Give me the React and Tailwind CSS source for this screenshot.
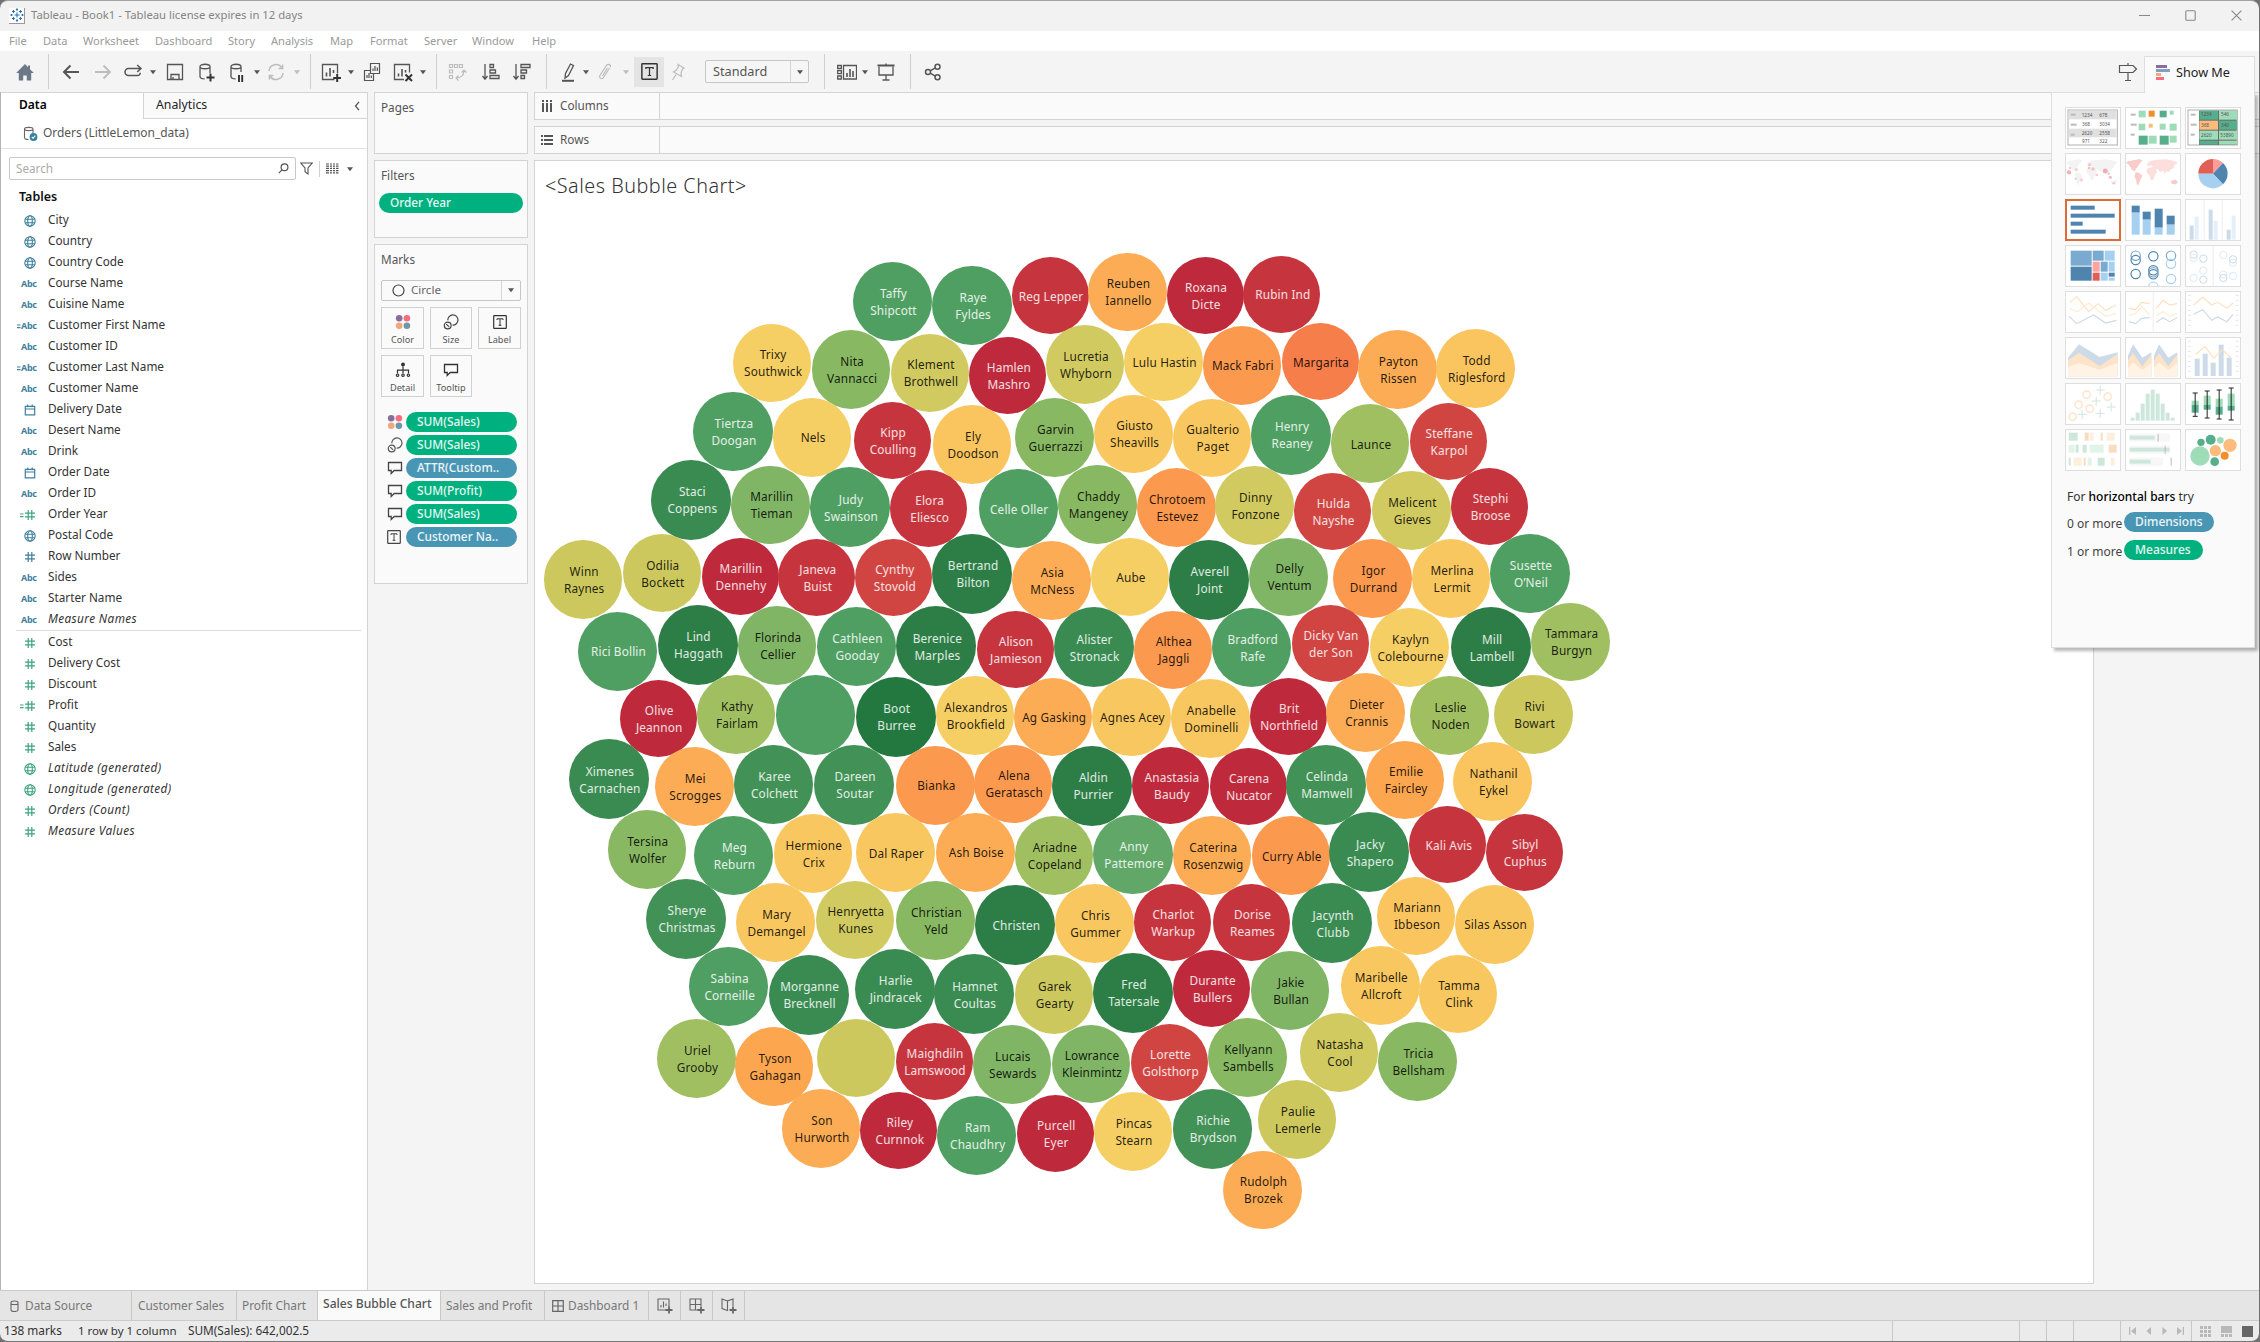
import React from "react";

/* ---------- bubble data: [label lines, cx, cy, colour key] ---------- */
const COLORS = {
  g1: "#22783f", g2: "#2c7e46", g3: "#3a8b51", g4: "#429156", g5: "#4f9f62", g6: "#60a768",
  l1: "#81b566", l2: "#88b862", l3: "#a0bf61",
  y1: "#ccc85e", y2: "#d0ca61", y3: "#f5ce64", y4: "#f9c75f", y5: "#fac45e",
  o1: "#fbac54", o2: "#fca650", o3: "#fb994e", o4: "#f57e4a",
  r1: "#d04542", r2: "#c6353e", r3: "#be293c",
};

const BUBBLES = [
  ["Taffy|Shipcott", 892.5, 301.4, "g5"], ["Raye|Fyldes", 972.1, 305.7, "g5"], ["Reg Lepper", 1050, 295.7, "r2"],
  ["Reuben|Iannello", 1127.5, 291.8, "o1"], ["Roxana|Dicte", 1205, 295.7, "r3"], ["Rubin Ind", 1281.8, 294.3, "r2"],
  ["Trixy|Southwick", 772.1, 362.9, "y3"], ["Nita|Vannacci", 851.1, 369.3, "l2"], ["Klement|Brothwell", 930, 372.9, "y2"],
  ["Hamlen|Mashro", 1007.9, 375.4, "r3"], ["Lucretia|Whyborn", 1085, 364.6, "y2"], ["Lulu Hastin", 1163.6, 361.8, "y3"],
  ["Mack Fabri", 1241.8, 365.4, "o3"], ["Margarita", 1320, 361.8, "o4"], ["Payton|Rissen", 1397.5, 369.6, "o1"],
  ["Todd|Riglesford", 1475.7, 368.6, "y5"],
  ["Tiertza|Doogan", 732.9, 431.8, "g5"], ["Nels", 812.1, 437.5, "y3"], ["Kipp|Coulling", 892.1, 440.7, "r2"],
  ["Ely|Doodson", 972.1, 444.3, "y5"], ["Garvin|Guerrazzi", 1054.6, 437.5, "l2"], ["Giusto|Sheavills", 1133.6, 433.9, "y4"],
  ["Gualterio|Paget", 1211.8, 437.9, "y4"], ["Henry|Reaney", 1291.1, 435, "g5"], ["Launce", 1370, 443.6, "l3"],
  ["Steffane|Karpol", 1448.2, 441.4, "r1"],
  ["Staci|Coppens", 691.4, 499.6, "g3"], ["Marillin|Tieman", 770.7, 505, "l1"], ["Judy|Swainson", 850, 507.1, "g5"],
  ["Elora|Eliesco", 928.6, 508.6, "r2"], ["Celle Oller", 1018.2, 508.6, "g5"], ["Chaddy|Mangeney", 1097.5, 504.3, "l2"],
  ["Chrotoem|Estevez", 1176.4, 507.5, "o3"], ["Dinny|Fonzone", 1254.6, 505.7, "y2"], ["Hulda|Nayshe", 1332.5, 511.8, "r1"],
  ["Melicent|Gieves", 1411.4, 510.4, "y2"], ["Stephi|Broose", 1489.6, 506.4, "r2"],
  ["Winn|Raynes", 583.2, 579.3, "y1"], ["Odilia|Bockett", 661.8, 573.2, "y1"], ["Marillin|Dennehy", 740, 576.4, "r3"],
  ["Janeva|Buist", 816.8, 577.9, "r2"], ["Cynthy|Stovold", 893.9, 577.5, "r1"], ["Bertrand|Bilton", 972.1, 573.9, "g2"],
  ["Asia|McNess", 1051.4, 580.4, "o1"], ["Aube", 1130, 576.8, "y3"], ["Averell|Joint", 1208.9, 579.6, "g2"],
  ["Delly|Ventum", 1288.6, 576.8, "l1"], ["Igor|Durrand", 1372.5, 578.6, "o3"], ["Merlina|Lermit", 1451.1, 578.6, "y4"],
  ["Susette|O’Neil", 1530, 573.6, "g5"],
  ["Rici Bollin", 617.5, 651.4, "g5"], ["Lind|Haggath", 697.5, 644.6, "g2"], ["Florinda|Cellier", 777.1, 645.4, "l1"],
  ["Cathleen|Gooday", 856.4, 646.8, "g5"], ["Berenice|Marples", 936.4, 646.1, "g2"], ["Alison|Jamieson", 1015, 649.3, "r2"],
  ["Alister|Stronack", 1093.6, 647.1, "g3"], ["Althea|Jaggli", 1172.9, 650, "o3"], ["Bradford|Rafe", 1251.8, 647.5, "g5"],
  ["Dicky Van|der Son", 1330, 643.6, "r1"], ["Kaylyn|Colebourne", 1409.6, 647.5, "y3"], ["Mill|Lambell", 1491.1, 647.1, "g2"],
  ["Tammara|Burgyn", 1570.7, 641.8, "l3"],
  ["Olive|Jeannon", 658.2, 718.2, "r3"], ["Kathy|Fairlam", 736.1, 714.3, "l3"], ["", 815.4, 715, "g5"],
  ["Boot|Burree", 895.7, 716.8, "g1"], ["Alexandros|Brookfield", 975, 715.7, "y3"], ["Ag Gasking", 1053.2, 716.8, "o1"],
  ["Agnes Acey", 1131.4, 716.8, "y4"], ["Anabelle|Dominelli", 1210.4, 718.6, "y4"], ["Brit|Northfield", 1288.2, 716.4, "r3"],
  ["Dieter|Crannis", 1365.7, 712.5, "o1"], ["Leslie|Noden", 1449.6, 715.4, "l3"], ["Rivi|Bowart", 1533.6, 714.3, "y1"],
  ["Ximenes|Carnachen", 608.9, 779.3, "g3"], ["Mei|Scrogges", 694.3, 786.7, "o1"], ["Karee|Colchett", 773.5, 784.3, "g4"],
  ["Dareen|Soutar", 854.1, 785, "g4"], ["Bianka", 935.4, 785.3, "o3"], ["Alena|Geratasch", 1013.2, 784, "o3"],
  ["Aldin|Purrier", 1092.4, 785.7, "g2"], ["Anastasia|Baudy", 1170.9, 785.7, "r3"], ["Carena|Nucator", 1248.1, 786.7, "r3"],
  ["Celinda|Mamwell", 1325.9, 785, "g4"], ["Emilie|Faircley", 1405.1, 780, "o2"], ["Nathanil|Eykel", 1492.6, 781.3, "y5"],
  ["Tersina|Wolfer", 646.8, 849.3, "l2"], ["Meg|Reburn", 733.5, 855.3, "g5"], ["Hermione|Crix", 812.8, 853.3, "y4"],
  ["Dal Raper", 895.4, 852.7, "y4"], ["Ash Boise", 975.3, 852.3, "o1"], ["Ariadne|Copeland", 1053.8, 855.3, "l3"],
  ["Anny|Pattemore", 1133, 854.3, "g6"], ["Caterina|Rosenzwig", 1212.2, 855.7, "o1"], ["Curry Able", 1290.8, 855.7, "o3"],
  ["Jacky|Shapero", 1369.3, 852, "g3"], ["Kali Avis", 1447.8, 844.7, "r2"], ["Sibyl|Cuphus", 1524.3, 852.3, "r2"],
  ["Sherye|Christmas", 686, 919, "g4"], ["Mary|Demangel", 775.6, 922.3, "y4"], ["Henryetta|Kunes", 854.8, 920, "y2"],
  ["Christian|Yeld", 935.4, 920.3, "l2"], ["Christen", 1015.3, 925, "g2"], ["Chris|Gummer", 1094.5, 923.3, "y4"],
  ["Charlot|Warkup", 1172.3, 922.3, "r2"], ["Dorise|Reames", 1251.5, 922.7, "r2"], ["Jacynth|Clubb", 1332.1, 923, "g3"],
  ["Mariann|Ibbeson", 1416.1, 916, "y5"], ["Silas Asson", 1494.6, 924.3, "y4"],
  ["Sabina|Corneille", 728.7, 986.3, "g5"], ["Morganne|Brecknell", 808.6, 994.7, "g3"], ["Harlie|Jindracek", 894.7, 988.7, "g3"],
  ["Hamnet|Coultas", 973.9, 994, "g3"], ["Garek|Gearty", 1053.8, 994.7, "y1"], ["Fred|Tatersale", 1133, 992.7, "g2"],
  ["Durante|Bullers", 1211.6, 988.3, "r3"], ["Jakie|Bullan", 1290.1, 990.7, "l1"], ["Maribelle|Allcroft", 1380.3, 985.7, "y4"],
  ["Tamma|Clink", 1458.1, 994, "y4"],
  ["Uriel|Grooby", 696.4, 1058.7, "l3"], ["Tyson|Gahagan", 774.2, 1066.3, "o2"], ["", 856.1, 1058, "y1"],
  ["Maighdiln|Lamswood", 934, 1061.3, "r2"], ["Lucais|Sewards", 1011.8, 1064.3, "l1"], ["Lowrance|Kleinmintz", 1091, 1064, "l1"],
  ["Lorette|Golsthorp", 1169.5, 1062.3, "r1"], ["Kellyann|Sambells", 1247.4, 1057.7, "l2"], ["Natasha|Cool", 1339, 1052.7, "y2"],
  ["Tricia|Bellsham", 1417.5, 1061.3, "l2"],
  ["Son|Hurworth", 821, 1128.7, "o1"], ["Riley|Curnnok", 898.9, 1130, "r3"], ["Ram|Chaudhry", 976.7, 1135.7, "g5"],
  ["Purcell|Eyer", 1055.2, 1133.3, "r3"], ["Pincas|Stearn", 1133, 1131.3, "y3"], ["Richie|Brydson", 1212.2, 1129, "g4"],
  ["Paulie|Lemerle", 1297, 1119.3, "y1"], ["Rudolph|Brozek", 1262.5, 1190, "o1"],
];

const SHEET_X = 535;
const SHEET_Y = 161;

function radiusFor(key) {
  if (key[0] === "r" || key === "o4") return 38.5;
  if (key === "g1" || key === "g2" || key === "g3") return 40;
  if (key[0] === "g") return 39.7;
  return 39.3;
}

function Bubble({ label, cx, cy, tone }) {
  const r = radiusFor(tone);
  const light = tone[0] === "g" || tone[0] === "r";
  return (
    <div
      className={
        "absolute flex flex-col items-center justify-center rounded-full pl-[2px] pt-px text-[11.8px] leading-[17px] tracking-[0.15px] whitespace-nowrap " +
        (light ? "text-white/85" : "text-black/85")
      }
      style={{ left: cx - r - SHEET_X, top: cy - r - SHEET_Y, width: 2 * r, height: 2 * r, backgroundColor: COLORS[tone] }}
    >
      {label.split("|").map((line) => (
        <span key={line}>{line}</span>
      ))}
    </div>
  );
}

/* ---------- small icons ---------- */
const Svg = ({ w = 20, h = 20, vb, className = "", children, c = "#555", sw = 1.3 }) => (
  <svg width={w} height={h} viewBox={vb || `0 0 ${w} ${h}`} className={"shrink-0 " + className} fill="none" stroke={c} strokeWidth={sw}>
    {children}
  </svg>
);

const Caret = ({ className = "", c = "#555" }) => (
  <Svg w={8} h={6} c="none" className={className}><path d="M1 1.2h6L4 5.2z" fill={c} /></Svg>
);

const Globe = ({ c }) => (
  <Svg w={12} h={12} c={c} sw={1.1}>
    <circle cx="6" cy="6" r="5.2" />
    <ellipse cx="6" cy="6" rx="2.3" ry="5.2" />
    <path d="M1.2 4.2h9.6M1.2 7.8h9.6" />
  </Svg>
);
const Hash = ({ c }) => (
  <Svg w={12} h={12} c={c} sw={1.2}><path d="M4.2 1v10M7.8 1v10M1 4.2h10M1 7.8h10" /></Svg>
);
const CalcMark = ({ c }) => (
  <Svg w={4} h={12} c={c} sw={1.1}><path d="M0 5h3.5M0 7.6h3.5" /></Svg>
);
const Calendar = ({ c }) => (
  <Svg w={12} h={12} c={c} sw={1.2}><path d="M1.3 2.3h9.4v8.6H1.3zM1.3 5h9.4M3.8 .6v2.6M8.2 .6v2.6" /></Svg>
);
const ColorDots = ({ className = "" }) => (
  <Svg w={16} h={16} c="none" className={className}>
    <circle cx="4.2" cy="4.2" r="3.3" fill="#876e9b" /><circle cx="11.9" cy="4.2" r="3.3" fill="#f86d7d" />
    <circle cx="4.2" cy="11.8" r="3.3" fill="#f2a67c" /><circle cx="11.9" cy="11.8" r="3.3" fill="#6f98a5" />
  </Svg>
);
const SizeIcon = ({ c = "#444" }) => (
  <Svg w={16} h={16} c={c} sw={1.2}>
    <path d="M4.8 6.300A5.100 5.100 0 1 1 9.600 11.100" /><circle cx="4.700" cy="11.500" r="3.400" /><path d="M3.300 10.100l2.800 2.800" />
  </Svg>
);
const LabelIcon = ({ c = "#444", s = 14 }) => (
  <Svg w={s} h={s} vb="0 0 14 14" c={c} sw={1.2}>
    <rect x=".7" y=".7" width="12.6" height="12.6" rx=".6" />
    <path d="M4 5V3.8h6V5M7 3.8v6.4M5.6 10.3h2.8" strokeWidth="1" />
  </Svg>
);
const DetailIcon = () => (
  <Svg w={16} h={16} c="#333" sw={1.2}>
    <circle cx="8" cy="2.6" r="2" fill="#333" stroke="none" />
    <path d="M8 4.5v7M2.500 11.500V8.200h11v3.300" />
    <circle cx="2.6" cy="13.2" r="1.2" /><circle cx="8" cy="13.2" r="1.2" /><circle cx="13.4" cy="13.2" r="1.2" />
  </Svg>
);
const TipIcon = ({ c = "#444" }) => (
  <Svg w={16} h={16} c={c} sw={1.3}><path d="M1.500 2.500h13v8H7.200l-3 3v-3H1.500z" /></Svg>
);

/* ---------- top bars ---------- */
function TitleBar() {
  return (
    <div className="flex h-[31px] items-center rounded-t-lg border-t border-[#a0a0a0] bg-[#f2f2f2] pb-px">
      <div className="ml-[9px] flex h-4 w-4 items-center justify-center border-r border-b border-[#999] bg-white">
        <Svg w={14} h={14} c="#2f75a8" sw={1.1}>
          <path d="M7 4.5v5M4.500 7h5M7 .3v2.400M5.900 1.500h2.200M7 11.300v2.400M5.900 12.500h2.200M.3 7h2.400M1.500 5.900v2.200M11.300 7h2.400M12.500 5.900v2.200M3.500 2v3M2 3.500h3M10.500 2v3M9 3.500h3M3.500 9v3M2 10.500h3M10.500 9v3M9 10.500h3" />
        </Svg>
      </div>
      <div className="ml-[6px] text-[11.300px] text-[#858585]">Tableau - Book1 - Tableau license expires in 12 days</div>
      <div className="mr-[17px] ml-auto flex items-center gap-[35px]">
        <Svg w={11} h={11} c="#888" sw={1}><path d="M0 5.500h11" /></Svg>
        <Svg w={11} h={11} c="#888" sw={1.100}><rect x=".8" y=".8" width="9.4" height="9.4" rx="1" /></Svg>
        <Svg w={11} h={11} c="#888" sw={1.100}><path d="M.6 .6l9.800 9.800M10.400 .6L.6 10.400" /></Svg>
      </div>
    </div>
  );
}

function MenuBar() {
  return (
    <div className="flex h-5 items-center bg-white pt-px pl-[9px] text-[11.100px] text-[#9a9a9a]">
      <span className="w-[34px]">File</span><span className="w-[40px]">Data</span><span className="w-[72px]">Worksheet</span>
      <span className="w-[73px]">Dashboard</span><span className="w-[43px]">Story</span><span className="w-[59px]">Analysis</span>
      <span className="w-[40px]">Map</span><span className="w-[54px]">Format</span><span className="w-[48px]">Server</span>
      <span className="w-[60px]">Window</span><span>Help</span>
    </div>
  );
}

const Sep = ({ className }) => <div className={"h-[35px] w-px shrink-0 bg-[#cfcfcf] " + className} />;

function Toolbar() {
  const D = "#555";
  const G = "#bdbdbd";
  return (
    <div className="flex h-[41px] items-center bg-[#f4f4f4]">
      <Svg className="ml-[15px]" c="none"><path d="M10 2L1.200 11h2.600v7.500h4.400v-5h3.600v5h4.400V11h2.600L15 7.200V3.400h-2v1.800z" fill="#6a7887" /></Svg>
      <Sep className="ml-[13px]" />
      <Svg className="ml-[12px]" c={D} sw={2}><path d="M18 10H3M9.500 3.500L3 10l6.500 6.500" /></Svg>
      <Svg className="ml-[12px]" c={G} sw={1.800}><path d="M2 10h15M10.500 3.500L17 10l-6.500 6.500" /></Svg>
      <Svg className="ml-[10px]" c={D} sw={1.500}><path d="M17.500 6.500H5.500a3.500 3.500 0 0 0 0 7h9a2.800 2.800 0 0 0 2.800-2.800M14.200 3l3.800 3.500-3.800 3.500" /></Svg>
      <Caret className="ml-[6px]" />
      <Svg className="ml-[8px]" c={D}><path d="M2.500 2.500h15v15h-15zM6 17.500v-5h8v5M8 15v2.500" /></Svg>
      <Svg className="ml-[11px]" c={D}><path d="M4 4.500c0-3 10-3 10 0s-10 3-10 0v10c0 1.600 2 2.400 4.600 2.400M14 4.500V11" /><path d="M14.500 11.500v8M10.500 15.500h8" strokeWidth="2" stroke="#333" /></Svg>
      <Svg className="ml-[11px]" c={D}><path d="M4 4.500c0-3 10-3 10 0s-10 3-10 0v10c0 1.600 2 2.400 4.600 2.400M14 4.500V10" /><path d="M12 13v7M15.200 13v7" strokeWidth="1.9" stroke="#333" /></Svg>
      <Caret className="ml-[6px]" />
      <Svg className="ml-[5px]" c={G} sw={1.500}><path d="M3 9a7 7 0 0 1 13-3M17 11a7 7 0 0 1-13 3M16.600 2.500v4h-4M3.400 17.500v-4h4" /></Svg>
      <Caret className="ml-[7px]" c={G} />
      <Sep className="ml-[9px]" />
      <Svg className="ml-[10px]" c={D}><path d="M13.500 17.500h-12v-15h15v9" /><path d="M5.500 14.500v-4M9 14.500V6M12.500 11V8" strokeWidth="1.6" /><path d="M16.200 12v8M12.200 16h8" strokeWidth="2" stroke="#333" /></Svg>
      <Caret className="ml-[6px]" />
      <Svg className="ml-[7px]" c={D} sw={1.200}><path d="M8.500 1.500h9v10h-9zM8.500 8.500h-6v10h9v-7M11 9V6.500M13 9V4M15.300 9V5.500M5 16v-3M7 16v-5M9.300 16v-2.500" /></Svg>
      <Svg className="ml-[11px]" c={D}><path d="M11 17.500h-9.500v-15h15v8" /><path d="M5.500 14.500v-3M9 14.500V7M12.500 10.500V8" strokeWidth="1.6" /><path d="M12.500 12.500l6.500 6.500M19 12.500L12.500 19" strokeWidth="2" stroke="#333" /></Svg>
      <Caret className="ml-[6px]" />
      <Sep className="ml-[9px]" />
      <Svg className="ml-[10px]" c={G} sw={1.200}><path d="M2.500 2.500h3v3h-3zM7.500 2.500h3v3h-3zM12.500 2.500h3v3h-3zM2.500 8h3v3h-3zM2.500 13.500h3v3h-3zM17 8c0 5-3 8-8 8M14.500 10.500L17 8l2.500 2.500M11.500 13.500L9 16l2.500 2.500" /></Svg>
      <Svg className="ml-[14px]" c={D}><path d="M4 2v15M1.500 14L4 17.200 6.500 14M9 2.500h3.500v3H9zM9 8h5.500v3H9zM9 13.500h9v3H9z" /></Svg>
      <Svg className="ml-[11px]" c={D}><path d="M4 2v15M1.500 14L4 17.200 6.500 14M9 2.500h9v3H9zM9 8h5.500v3H9zM9 13.500h3.500v3H9z" /></Svg>
      <Sep className="ml-[14px]" />
      <Svg className="ml-[11px]" c={D}><path d="M12.500 2l3 1.500-5 10-3.500 2.500.5-4.500z" /><path d="M4 18.800h12" strokeWidth="2" /></Svg>
      <Caret className="ml-[4px]" />
      <Svg className="ml-[5px]" c={G} sw={1.200}><path d="M14.500 6L8.500 15.500c-1.500 2.200-5 .5-3.600-2L11.500 3.300c1.500-2.200 5-.3 3.700 2M12.500 6l-5 8" /></Svg>
      <Caret className="ml-[7px]" c={G} />
      <div className="ml-[4px] flex h-[30px] w-[30px] items-center justify-center bg-[#e4e4e4]"><LabelIcon s={17} c="#333" /></div>
      <Svg className="ml-[4px]" c={G} sw={1.200}><path d="M10 2.500l6 3.500-1.500 1-1.500 4 .5 3.500-8-4.500 3-2 2-3.500zM8 12.500L4.500 18" /></Svg>
      <div className="ml-[17px] flex h-[23px] w-[104px] items-center rounded-[2px] border border-[#c6c6c6] bg-[#f6f6f6]">
        <span className="w-[84px] pl-[7px] text-[12.700px] text-[#555]">Standard</span>
        <div className="flex h-full flex-1 items-center justify-center border-l border-[#d6d6d6]"><Caret /></div>
      </div>
      <Sep className="ml-[15px]" />
      <Svg className="ml-[12px]" c={D}><path d="M.700 3.500h3.600v3H.700zM.700 8.700h3.600v3H.700zM.700 14h3.600v3H.700zM6.500 3.500h13v13.500h-13z" /><path d="M10 15v-4M13 15V7M16 15V9" strokeWidth="1.600" /></Svg>
      <Caret className="ml-[4px]" />
      <Svg className="ml-[7px]" c={D}><path d="M1.500 3.500h17" strokeWidth="2" /><path d="M3 4.500v8.500h14V4.500M10 13v5M6.500 18h7M10 1.500v2" /></Svg>
      <Sep className="ml-[14px]" />
      <Svg className="ml-[12px]" c={D} sw={1.500}><circle cx="5" cy="10" r="2.500" /><circle cx="14.500" cy="4.700" r="2.500" /><circle cx="14.500" cy="15.300" r="2.500" /><path d="M7.200 8.800l5.100-2.900M7.200 11.200l5.100 2.900" /></Svg>
      <Svg w={20} h={20} className="mr-[121px] ml-auto" c={D} sw={1.200}><path d="M10 1v2M10 10.500v8M7 18.500h6M1.500 3.500h13.500l3.500 3.500-3.500 3.500H1.500z" /></Svg>
    </div>
  );
}

/* ---------- data pane ---------- */
const B = "#3f7f9c";
const GR = "#3ea381";
const DIMS = [
  ["globe", "City"], ["globe", "Country"], ["globe", "Country Code"], ["abc", "Course Name"], ["abc", "Cuisine Name"],
  ["=abc", "Customer First Name"], ["abc", "Customer ID"], ["=abc", "Customer Last Name"], ["abc", "Customer Name"],
  ["date", "Delivery Date"], ["abc", "Desert Name"], ["abc", "Drink"], ["date", "Order Date"], ["abc", "Order ID"],
  ["=num", "Order Year", "g"], ["globe", "Postal Code"], ["num", "Row Number"], ["abc", "Sides"], ["abc", "Starter Name"],
  ["abc", "Measure Names", "b", true],
];
const MEAS = [
  ["num", "Cost", "g"], ["num", "Delivery Cost", "g"], ["num", "Discount", "g"], ["=num", "Profit", "g"], ["num", "Quantity", "g"],
  ["num", "Sales", "g"], ["globe", "Latitude (generated)", "g", true], ["globe", "Longitude (generated)", "g", true],
  ["num", "Orders (Count)", "g", true], ["num", "Measure Values", "g", true],
];

function Field({ row }) {
  const [kind, name, tone = "b", italic] = row;
  const c = tone === "g" ? GR : B;
  return (
    <div className="flex h-[21px] items-center">
      <div className="flex w-[36px] items-center justify-end">
        {kind[0] === "=" && <CalcMark c={c} />}
        {kind.endsWith("abc") && <span className="w-[16px] pt-px text-[9px] font-bold tracking-[-0.3px] text-[#3f7f9c]">Abc</span>}
        {kind === "globe" && <Globe c={c} />}
        {kind.endsWith("num") && <Hash c={c} />}
        {kind === "date" && <Calendar c={c} />}
        {!kind.endsWith("abc") && <span className="w-px" />}
      </div>
      <span className={italic ? "ml-[11px] pb-px text-[11.75px] tracking-[0.4px] text-[#333] italic" : "ml-[11px] pb-px text-[11.75px] text-[#333]"}>{name}</span>
    </div>
  );
}

function DataPane() {
  return (
    <div className="flex w-[367px] shrink-0 flex-col border-r border-[#d4d4d4] bg-white">
      <div className="flex h-[27px]">
        <div className="w-[142px] border-t border-[#d4d4d4] bg-white pt-[3px] pl-[18px] text-[12px] font-semibold text-black">Data</div>
        <div className="flex flex-1 items-center border border-r-0 border-[#d4d4d4] bg-[#fafafa] pl-[12px] text-[12.300px] text-[#222]">
          Analytics
          <Svg w={6} h={10} c="#555" sw={1.3} className="mr-[7px] ml-auto"><path d="M5 .8L1.500 5 5 9.200" /></Svg>
        </div>
      </div>
      <div className="flex h-[30px] items-center border-b border-[#e2e2e2] pb-px pl-[22px]">
        <Svg w={15} h={15} c="#666" sw={1.1}>
          <path d="M1.500 3c0-2.200 8.500-2.200 8.500 0s-8.500 2.200-8.500 0v8.500c0 1.200 1.800 2 4 2M10 3v4" />
          <circle cx="10.500" cy="11" r="3.900" fill="#33809f" stroke="none" /><path d="M8.800 11l1.300 1.300 2.200-2.600" stroke="#fff" />
        </Svg>
        <span className="ml-[5px] text-[11.950px] text-[#555]">Orders (LittleLemon_data)</span>
      </div>
      <div className="mt-[8px] flex h-[23px] items-center pl-[8px]">
        <div className="flex h-[23px] w-[287px] items-center rounded-[2px] border border-[#c8c8c8] pr-[6px] pl-[6px]">
          <span className="text-[11.700px] text-[#aaa]">Search</span>
          <Svg w={11} h={11} c="#555" sw={1.2} className="ml-auto"><circle cx="6.500" cy="4.300" r="3.400" /><path d="M4 6.800L.8 10.200" /></Svg>
        </div>
        <Svg w={13} h={13} c="#555" sw={1.1} className="ml-[4px]"><path d="M.8 1h11.400L8 6v6L5 9.800V6z" /></Svg>
        <div className="ml-[6px] h-[16px] w-px bg-[#cfcfcf]" />
        <Svg w={13} h={11} c="#555" sw={1.200} className="ml-[6px]"><path d="M0 1h3M4 1h2M7 1h2M10 1h2.500M0 3.200h3M4 3.200h2M7 3.200h2M10 3.200h2.500M0 5.400h3M4 5.400h2M7 5.400h2M10 5.400h2.500M0 7.600h3M4 7.600h2M7 7.600h2M10 7.600h2.500M0 9.800h3M4 9.800h2M7 9.800h2M10 9.800h2.500" /></Svg>
        <Caret className="ml-[7px]" />
      </div>
      <div className="mt-[7px] flex h-[21px] items-center pl-[18px] text-[12.500px] font-semibold text-[#111]">Tables</div>
      <div className="mt-[2px] flex flex-col">{DIMS.map((r) => <Field key={r[1]} row={r} />)}</div>
      <div className="mr-[6px] ml-[15px] h-px bg-[#dcdcdc]" />
      <div className="mt-px flex flex-col">{MEAS.map((r) => <Field key={r[1]} row={r} />)}</div>
    </div>
  );
}

/* ---------- cards ---------- */
const MarkButton = ({ icon, label, className }) => (
  <div className={"flex h-[42px] flex-col items-center border border-[#d0d0d0] pt-[6px] " + className}>
    <div className="flex h-[16px] items-center justify-center">{icon}</div>
    <span className="mt-[2px] text-[9.200px] leading-[15px] text-[#555]">{label}</span>
  </div>
);

const PILLS = [
  [<ColorDots key="i" />, "SUM(Sales)", "g"], [<SizeIcon key="i" c="#555" />, "SUM(Sales)", "g"], [<TipIcon key="i" />, "ATTR(Custom..", "b"],
  [<TipIcon key="i" />, "SUM(Profit)", "g"], [<TipIcon key="i" />, "SUM(Sales)", "g"], [<LabelIcon key="i" />, "Customer Na..", "b"],
];

function Cards() {
  const card = "border border-[#d4d4d4] bg-[#fafafa] pl-[6px] text-[11.75px] text-[#555]";
  return (
    <div className="ml-[6px] flex w-[154px] shrink-0 flex-col">
      <div className={card + " h-[62px] pt-[6px]"}>Pages</div>
      <div className={card + " mt-[6px] h-[78px] pt-[6px]"}>
        Filters
        <div className="mt-[8px] -ml-[2px] flex h-5 w-[144px] items-center rounded-full bg-[#00b180] pl-[11px] text-[11.800px] font-medium text-white/90">Order Year</div>
      </div>
      <div className={card + " mt-[6px] h-[340px] pt-[6px]"}>
        Marks
        <div className="mt-[11px] flex h-[21px] w-[140px] items-center rounded-[2px] border border-[#c6c6c6] bg-[#fafafa]">
          <Svg w={13} h={13} c="#444" sw={1.200} className="ml-[10px]"><circle cx="6.500" cy="6.500" r="5.500" /></Svg>
          <span className="ml-[6px] text-[11.600px] text-[#666]">Circle</span>
          <div className="ml-auto flex h-full w-[19px] items-center justify-center border-l border-[#d6d6d6]"><Caret /></div>
        </div>
        <div className="mt-[6px] flex w-[140px] flex-wrap gap-x-[6px] gap-y-[6px]">
          <MarkButton className="w-[43px]" icon={<ColorDots />} label="Color" />
          <MarkButton className="w-[42px]" icon={<SizeIcon />} label="Size" />
          <MarkButton className="w-[43px]" icon={<LabelIcon c="#333" />} label="Label" />
          <MarkButton className="w-[43px]" icon={<DetailIcon />} label="Detail" />
          <MarkButton className="w-[42px]" icon={<TipIcon c="#333" />} label="Tooltip" />
        </div>
        <div className="mt-[15px] flex flex-col gap-[3px] pl-[5px]">
          {PILLS.map(([icon, label, tone], i) => (
            <div key={i} className="flex h-5 items-center">
              <div className="flex w-[20px] items-center pl-px">{icon}</div>
              <div className={"flex h-5 w-[111px] items-center rounded-full pl-[11px] text-[11.900px] font-medium text-white/90 " + (tone === "g" ? "bg-[#00b180]" : "bg-[#4996b4]")}>{label}</div>
            </div>
          ))}
        </div>
      </div>
    </div>
  );
}

/* ---------- worksheet ---------- */
const Shelf = ({ icon, label, className = "" }) => (
  <div className={"flex h-[28px] items-center border border-r-0 border-[#d4d4d4] bg-[#fafafa] pl-[6px] " + className}>
    {icon}
    <span className="ml-[7px] w-[99px] text-[11.75px] text-[#555]">{label}</span>
    <div className="h-full w-px bg-[#d4d4d4]" />
  </div>
);

function Worksheet() {
  return (
    <div className="ml-[6px] flex min-w-0 flex-1 flex-col">
      <Shelf label="Columns" icon={<Svg w={12} h={12} c="#555" sw={2}><path d="M2 0v2M2 3v9M6 0v2M6 3v9M10 0v2M10 3v9" /></Svg>} />
      <Shelf className="mt-[6px]" label="Rows" icon={<Svg w={12} h={12} c="#555" sw={2}><path d="M0 2h2M3 2h9M0 6h2M3 6h9M0 10h2M3 10h9" /></Svg>} />
      <div className="relative mt-[6px] h-[1124px] w-[1560px] border border-[#d4d4d4] bg-white">
        <div className="pt-[10px] pl-[10px] text-[19.800px] leading-[30px] font-light tracking-[0.5px] text-[#333]">&lt;Sales Bubble Chart&gt;</div>
        {BUBBLES.map(([label, cx, cy, tone]) => (
          <Bubble key={cx + "-" + cy} label={label} cx={cx} cy={cy} tone={tone} />
        ))}
      </div>
    </div>
  );
}

/* ---------- Show Me ---------- */
const S1 = "#4e84ad";
const S2 = "#a6d0f0";
const S3 = "#7aaad0";
const bars = (list) => list.map(([x, y, w, h, f], i) => <rect key={i} x={x} y={y} width={w} height={h} fill={f} />);
const rings = (list, r, sw) => list.map(([x, y, c], i) => <circle key={i} cx={x} cy={y} r={r} fill="none" stroke={c} strokeWidth={sw} />);
const dots = (list) => list.map(([x, y, r, c], i) => <circle key={i} cx={x} cy={y} r={r} fill={c} />);
const line = (pts, c) => <polyline key={pts} points={pts} fill="none" stroke={c} strokeWidth="3.5" />;
const txt = (x, y, s) => <text key={s + y} x={x} y={y} fontSize="14" fill="#555">{s}</text>;
const ticks = (x) => <path d={[13, 28, 43, 58, 73, 88, 103].map((y) => `M${x} ${y}h9`).join("")} stroke="#e6e6e6" strokeWidth="3" />;
const LAND = "M6 26l20-4 18-3 8 4-8 8-6 10-6 6-2 8-8-4-6-10-6-8-6-2zM32 58l10 2 10 8-6 12-5 14-5 2-2-14-5-12zM68 30l8-6 10-2 2 6-8 8-8 4-6-2zM68 46l14-4 10 4 4 10-6 10-6 14-6 2-4-14-8-8-2-8zM84 22l16-2 24-1 24 5 10 5-10 8-2 8-8 4-6 8-8-2-4 8-6-10-8 4-8-8-12-4-6-8zM138 84l14-4 6 8-6 6-12-2z";

const THUMBS = [
  <>
    <rect x="9" y="9" width="148" height="105" fill="#fff" stroke="#b0b0b0" strokeWidth="3" />
    {bars([[11, 11, 144, 26, "#e0e0e0"], [11, 65, 144, 26, "#e0e0e0"], [17, 20, 15, 6, "#bbb"], [17, 50, 18, 6, "#bbb"], [17, 80, 12, 6, "#bbb"]])}
    {txt(50, 29, "1234")}{txt(103, 29, "678")}{txt(51, 56, "368")}{txt(103, 56, "3034")}{txt(50, 83, "2620")}{txt(103, 83, "2558")}{txt(51, 108, "971")}{txt(103, 108, "322")}
  </>,
  <>{bars([[17, 20, 15, 6, "#bbb"], [17, 50, 18, 6, "#bbb"], [17, 80, 12, 6, "#bbb"], [41, 11, 21, 20, "#9edcb8"], [71, 11, 18, 18, "#f28e2b"], [104, 11, 21, 20, "#56ae8c"], [134, 11, 12, 12, "#9edcb8"], [41, 50, 20, 20, "#9edcb8"], [71, 50, 12, 12, "#fdbc7c"], [104, 50, 18, 18, "#9edcb8"], [134, 50, 21, 21, "#9edcb8"], [41, 86, 27, 27, "#56ae8c"], [71, 86, 24, 24, "#9edcb8"], [104, 86, 27, 27, "#56ae8c"], [134, 86, 21, 21, "#9edcb8"]])}</>,
  <>
    <rect x="9" y="9" width="148" height="105" fill="#fff" stroke="#b0b0b0" strokeWidth="3" />
    {bars([[17, 20, 15, 6, "#bbb"], [17, 50, 18, 6, "#bbb"], [17, 80, 12, 6, "#bbb"], [42, 11, 113, 103, "#6b6b6b"], [43, 11, 56, 27, "#56ae8c"], [102, 11, 54, 27, "#9edcb8"], [43, 41, 56, 27, "#fdbc7c"], [102, 41, 54, 27, "#56ae8c"], [43, 71, 56, 27, "#9edcb8"], [102, 71, 54, 27, "#9edcb8"], [43, 101, 56, 12, "#56ae8c"], [102, 101, 54, 12, "#9edcb8"]])}
    {txt(48, 28, "1234")}{txt(108, 28, "546")}{txt(48, 59, "368")}{txt(108, 59, "340")}{txt(48, 89, "2620")}{txt(106, 89, "53890")}
  </>,
  <><path d={LAND} fill="#f3f3f3" />{dots([[12, 58, 6.5, "#ecb3b8"], [15, 45, 3.500, "#f6c9c9"], [34, 50, 5, "#f8d2cf"], [72, 45, 4, "#f0bfc2"], [74, 35, 5, "#f6c9c9"], [84, 48, 5, "#f0bfc2"], [121, 54, 7.500, "#eab0b8"], [131, 62, 3.500, "#f0bfc2"], [95, 66, 4, "#f6c9c9"], [32, 77, 3, "#f0bfc2"], [49, 81, 5, "#f8d2cf"], [136, 73, 5, "#f3bfc4"], [146, 91, 3.500, "#f0bfc2"]])}</>,
  <><path d={LAND} fill="#fcdfdd" /><path d="M6 26l20-4 18-3 8 4-8 8-6 10-6 6-2 8-8-4-6-10-6-8-6-2zM32 58l10 2 10 8-6 12-5 14-5 2-2-14-5-12zM138 84l14-4 6 8-6 6-12-2z" fill="#f7cccb" /></>,
  <>
    <path d="M84 62V18A44 44 0 0 0 40 62z" fill="#e15f57" /><path d="M84 62V18A44 44 0 0 1 114 30z" fill="#ff9d9a" />
    <path d="M84 62L114 30A44 44 0 0 1 114 94z" fill={S1} /><path d="M84 62H40A44 44 0 0 0 114 94z" fill={S2} />
  </>,
  <>{bars([[17, 20, 72, 12, S1], [17, 44, 132, 12, S1], [17, 68, 36, 12, S1], [17, 92, 105, 12, S1]])}</>,
  <>{bars([[20, 20, 24, 21, S1], [20, 41, 24, 66, S2], [53, 38, 24, 24, S1], [53, 62, 24, 45, S2], [89, 29, 24, 57, S1], [89, 86, 24, 21, S2], [125, 50, 24, 27, S1], [125, 77, 24, 30, S2]])}</>,
  <>{bars([[56, 2, 3, 120, "#eee"], [110, 2, 3, 120, "#eee"], [14, 80, 12, 42, "#cddae7"], [29, 53, 12, 69, "#e3f0fb"], [71, 32, 12, 90, "#cddae7"], [86, 65, 12, 57, "#e3f0fb"], [125, 92, 12, 30, "#cddae7"], [140, 50, 12, 72, "#e3f0fb"]])}</>,
  <>{bars([[17, 17, 63, 45, S3], [17, 65, 63, 42, S1], [83, 17, 33, 30, S3], [119, 17, 30, 30, S2], [83, 50, 21, 30, "#ffa3a0"], [83, 83, 21, 24, "#e15f57"], [107, 50, 21, 30, S3], [131, 50, 18, 30, S2], [107, 83, 21, 24, S2], [131, 83, 18, 12, S1], [131, 98, 18, 9, S2]])}</>,
  <>{rings([[32, 32, S3], [32, 45, S1], [32, 87, S1], [85, 34, S1], [85, 76, S1], [85, 88, S1], [85, 82, S3], [85, 125, S2], [138, 32, S3], [138, 56, S2], [138, 102, S2]], 14, 3.500)}</>,
  <>{bars([[83, 2, 3, 120, "#ececec"]])}{rings([[26, 29, "#cddae7"], [26, 38, "#dcebf7"], [55, 41, "#cddae7"], [55, 77, "#dcebf7"], [26, 99, "#dcebf7"], [55, 104, "#cddae7"], [115, 30, "#dcebf7"], [144, 43, "#cddae7"], [144, 53, "#dcebf7"], [115, 89, "#dcebf7"], [115, 99, "#cddae7"], [144, 93, "#dcebf7"]], 11, 3)}</>,
  <>{line("15,35 35,17 71,62 99,38 122,58 154,42", "#fde0c0")}{line("13,52 38,62 71,36 122,76 154,68", "#fdedd2")}{line("12,76 35,98 86,72 122,96 154,88", "#cddae7")}</>,
  <>{bars([[83, 2, 3, 120, "#ececec"]])}{line("12,52 32,56 50,34 74,38", "#fde0c0")}{line("12,74 32,68 50,46 74,72", "#fdedd2")}{line("12,92 32,98 50,82 74,80", "#cddae7")}{line("94,52 114,28 134,42 156,38", "#fde0c0")}{line("94,74 114,62 134,76 156,68", "#fdedd2")}{line("94,94 114,80 134,92 156,80", "#cddae7")}</>,
  <>{ticks(9)}{ticks(152)}{line("26,42 53,18 80,42 98,34 126,52 144,36", "#fde0c0")}{line("26,70 53,56 80,88 98,78 126,92 144,70", "#cddae7")}</>,
  <><path d="M9 62L42 22l62 38 54-14v72H9z" fill="#cddae7" /><path d="M9 70L42 47l62 40 54-36v67H9z" fill="#fde3c8" /><path d="M9 90L42 78l62 20 54-20v40H9z" fill="#fef3e4" /></>,
  <><path d="M9 56L24 22l28 40 27-16v72H9zM87 56l15-34 28 40 27-16v72H87z" fill="#cddae7" /><path d="M9 70L24 48l28 40 27-36v66H9zM87 70l15-22 28 40 27-36v66H87z" fill="#fde3c8" /><path d="M9 92L24 76l28 22 27-20v40H9zM87 92l15-16 28 22 27-20v40H87z" fill="#fef3e4" /></>,
  <>{ticks(9)}{ticks(152)}{bars([[29, 65, 15, 52, "#cddae7"], [53, 50, 15, 67, "#cddae7"], [77, 77, 15, 40, "#cddae7"], [101, 23, 15, 94, "#cddae7"], [125, 62, 15, 55, "#cddae7"]])}{line("33,52 60,28 86,64 112,38 138,64", "#fde0c0")}</>,
  <>{rings([[65, 35, "#fde3c8"], [128, 41, "#fde3c8"], [41, 65, "#fde3c8"], [74, 77, "#fde3c8"], [23, 101, "#fde3c8"]], 11, 4)}<path d="M92 21h27M105.500 8v27M80 54h27M93.500 41v27M38 94h27M51.500 81v27M92 91h27M105.500 78v27M125 72h27M138.500 59v27" stroke="#cde7dc" strokeWidth="3" /></>,
  <>{bars([[17, 104, 12, 9, "#cde7dc"], [32, 89, 12, 24, "#cde7dc"], [47, 62, 12, 51, "#cde7dc"], [62, 32, 12, 81, "#cde7dc"], [77, 20, 12, 93, "#cde7dc"], [92, 32, 12, 81, "#cde7dc"], [107, 62, 12, 51, "#cde7dc"], [122, 89, 12, 24, "#cde7dc"], [137, 104, 12, 9, "#cde7dc"]])}</>,
  <>{bars([[20, 53, 21, 12, "#9edcb8"], [20, 65, 21, 24, "#56ae8c"], [56, 38, 21, 27, "#9edcb8"], [56, 65, 21, 15, "#56ae8c"], [92, 47, 21, 24, "#9edcb8"], [92, 71, 21, 24, "#56ae8c"], [128, 32, 21, 36, "#9edcb8"], [128, 68, 21, 15, "#56ae8c"]])}<path d="M30.500 30v70M23 30h15M23 100h15M66.500 24v81M59 24h15M59 105h15M102.500 21v87M95 21h15M95 108h15M138.500 15v96M131 15h15M131 111h15" stroke="#222" strokeWidth="3" /></>,
  <>{bars([[11, 11, 27, 24, "#cde7dc"], [59, 11, 12, 24, "#fadcc0"], [74, 11, 12, 24, "#feeedd"], [107, 11, 6, 24, "#fadcc0"], [125, 11, 24, 24, "#feeedd"], [11, 47, 18, 24, "#e2f4ea"], [32, 47, 9, 24, "#cde7dc"], [53, 47, 12, 24, "#cde7dc"], [74, 47, 42, 24, "#e2f4ea"], [131, 47, 24, 24, "#fadcc0"], [11, 86, 6, 24, "#cde7dc"], [26, 86, 24, 24, "#feeedd"], [56, 86, 6, 24, "#fadcc0"], [68, 86, 12, 24, "#e2f4ea"], [98, 86, 21, 24, "#cde7dc"], [137, 86, 12, 24, "#feeedd"]])}</>,
  <>{bars([[14, 14, 120, 24, "#f7f7f7"], [14, 50, 120, 24, "#f7f7f7"], [14, 86, 100, 24, "#f7f7f7"], [14, 20, 75, 12, "#cde7dc"], [14, 56, 120, 12, "#cde7dc"], [14, 92, 63, 12, "#cde7dc"], [98, 14, 3, 24, "#bbb"], [119, 50, 3, 24, "#bbb"], [137, 86, 3, 24, "#bbb"]])}</>,
  <>{dots([[45, 81, 29, "#9edcb8"], [48, 40, 11, "#56ae8c"], [77, 32, 15, "#56ae8c"], [106, 34, 10, "#9edcb8"], [135, 49, 20, "#fdbc7c"], [91, 65, 17, "#fdbc7c"], [119, 80, 12, "#f28e2b"], [89, 98, 13, "#56ae8c"]])}</>,
];

function ShowMe() {
  return (
    <div className="absolute top-[56px] right-[4px] flex w-[204px] flex-col items-end">
      <div className="relative z-10 flex h-[37px] w-[111px] items-center border border-b-0 border-[#dedede] bg-[#fafafa] pb-[6px] pl-[11px]">
        <Svg w={15} h={15} c="none">
          <rect width="11" height="3" fill="#876e9b" /><rect y="4" width="14" height="3" fill="#7e9fc8" />
          <rect y="8" width="5" height="3" fill="#f5a67c" /><rect y="12" width="8" height="3" fill="#f86d7d" />
        </Svg>
        <span className="ml-[5px] text-[12.650px] text-[#222]">Show Me</span>
      </div>
      <div className="-mt-px h-[556px] w-[204px] border border-[#dedede] bg-[#fafafa] pt-[14px] pl-[13px] shadow-[3px_3px_3px_rgba(0,0,0,0.28)]">
        <div className="grid w-[176px] grid-cols-3 gap-x-[4px] gap-y-[4px]">
          {THUMBS.map((art, i) => (
            <div key={i} className={i === 6 ? "h-[42px] w-[56px] bg-white outline-2 -outline-offset-2 outline-[#de6a35]" : "h-[42px] w-[56px] bg-white outline-1 -outline-offset-1 outline-[#dedede]"}>
              <svg viewBox="0 0 168 126" width="56" height="42" className="block">{art}</svg>
            </div>
          ))}
        </div>
        <div className="mt-[17px] pl-[2px] text-[12px] leading-[18px] text-[#333]">For <span className="font-medium text-black">horizontal bars</span> try</div>
        <div className="mt-[6px] flex h-5 items-center pl-[2px] text-[12px] text-[#444]">
          <span className="w-[57px] pt-[4px]">0 or more</span>
          <span className="flex h-5 w-[90px] items-center rounded-full bg-[#4996b4] pl-[11px] font-medium text-white/90">Dimensions</span>
        </div>
        <div className="mt-[8px] flex h-5 items-center pl-[2px] text-[12px] text-[#444]">
          <span className="w-[57px] pt-[4px]">1 or more</span>
          <span className="flex h-5 w-[79px] items-center rounded-full bg-[#00b180] pl-[11px] font-medium text-white/90">Measures</span>
        </div>
      </div>
    </div>
  );
}

/* ---------- bottom bars ---------- */
const Tab = ({ className, children }) => (
  <div className={"flex h-full items-center border-r border-[#c8c8c8] whitespace-nowrap " + className}>{children}</div>
);

function SheetTabs() {
  return (
    <div className="flex h-[31px] border-y border-[#cacaca] bg-[#e5e5e5] text-[11.850px] text-[#777]">
      <Tab className="w-[132px] pl-[10px]">
        <Svg w={9} h={12} c="#666" sw={1.100} className="mr-[6px]"><path d="M1 2.500c0-2 7-2 7 0v7.500c0 2-7 2-7 0zM1 3.500c0 1.400 7 1.400 7 0" /></Svg>Data Source
      </Tab>
      <Tab className="w-[105px] pl-[6px]">Customer Sales</Tab>
      <Tab className="w-[81px] pl-[5px]">Profit Chart</Tab>
      <Tab className="w-[123px] bg-[#fafafa] pb-[2px] pl-[5px] text-[12.100px] font-medium text-[#555]">Sales Bubble Chart</Tab>
      <Tab className="w-[104px] pl-[5px]">Sales and Profit</Tab>
      <Tab className="w-[104px] pl-[7px]">
        <Svg w={12} h={12} c="#666" sw={1.200} className="mr-[4px]"><path d="M.700 .700h10.600v10.600H.700zM6 .700v10.600M.700 6h10.600" /></Svg>Dashboard 1
      </Tab>
      <Tab className="w-[32px] justify-center"><Svg w={16} h={16} c="#666" sw={1.100}><path d="M10 12H1V1h11v8M4 9.500V7M6.500 9.500v-6M9 8V5.500" /><path d="M12 8.500v7M8.500 12h7" strokeWidth="1.800" /></Svg></Tab>
      <Tab className="w-[32px] justify-center"><Svg w={16} h={16} c="#666" sw={1.100}><path d="M9 12H1V1h11v7M6.500 1v11M1 6.500h11" /><path d="M12 8.500v7M8.500 12h7" strokeWidth="1.800" /></Svg></Tab>
      <Tab className="w-[32px] justify-center"><Svg w={16} h={16} c="#666" sw={1.100}><path d="M6.500 3L1 1v9.500l5.500 2V3L12 1v7" /><path d="M12 8.500v7M8.500 12h7" strokeWidth="1.800" /></Svg></Tab>
    </div>
  );
}

function StatusBar() {
  const cell = "h-full border-l border-[#c8c8c8]";
  const N = "#b8b8b8";
  return (
    <div className="flex h-[21px] items-center rounded-b-lg border-b border-[#777] bg-[#ebebeb] text-[11.800px] text-[#333]">
      <span className="w-[73px] pl-[4px] whitespace-nowrap">138 marks</span>
      <span className="ml-[5px] w-[110px] text-[11.500px] whitespace-nowrap">1 row by 1 column</span>
      <span>SUM(Sales): 642,002.5</span>
      <div className={cell + " ml-auto w-[127px]"} />
      <div className={cell + " w-[27px]"} />
      <div className={cell + " w-[27px]"} />
      <div className={cell + " w-[47px]"} />
      <div className={cell + " flex w-[71px] items-center gap-[9px] pl-[8px]"}>
        <Svg w={7} h={8} c="none"><path d="M0 0h1.300v8H0zM7 0v8L2 4z" fill={N} /></Svg>
        <Svg w={7} h={8} c="none"><path d="M6 0v8L1.500 4z" fill={N} /></Svg>
        <Svg w={7} h={8} c="none"><path d="M1.500 0v8L6 4z" fill={N} /></Svg>
        <Svg w={7} h={8} c="none"><path d="M5.700 0H7v8H5.700zM0 0v8l5-4z" fill={N} /></Svg>
      </div>
      <div className={cell + " flex w-[68px] items-center gap-[10px] pl-[8px]"}>
        <Svg w={11} h={11} c="none"><path d="M0 0h3v3H0zM4 0h3v3H4zM8 0h3v3H8zM0 4h3v3H0zM4 4h3v3H4zM8 4h3v3H8zM0 8h3v3H0zM4 8h3v3H4zM8 8h3v3H8z" fill={N} /></Svg>
        <Svg w={11} h={11} c="none"><path d="M0 0h11v7H0zM0 8h3v3H0zM4 8h3v3H4zM8 8h3v3H8z" fill={N} /></Svg>
        <div className="h-[11px] w-[11px] bg-[#666]" />
      </div>
    </div>
  );
}

export default function App() {
  return (
    <div className="h-[1342px] w-[2260px] overflow-hidden bg-[#707070] font-['Noto_Sans',sans-serif]">
      <div className="relative flex h-[1342px] w-[2259px] flex-col">
        <TitleBar />
        <MenuBar />
        <Toolbar />
        <div className="flex min-h-0 flex-1 border-l border-[#b4b4b4] bg-[#f4f4f4]">
          <DataPane />
          <Cards />
          <Worksheet />
        </div>
        <SheetTabs />
        <StatusBar />
        <ShowMe />
      </div>
    </div>
  );
}
